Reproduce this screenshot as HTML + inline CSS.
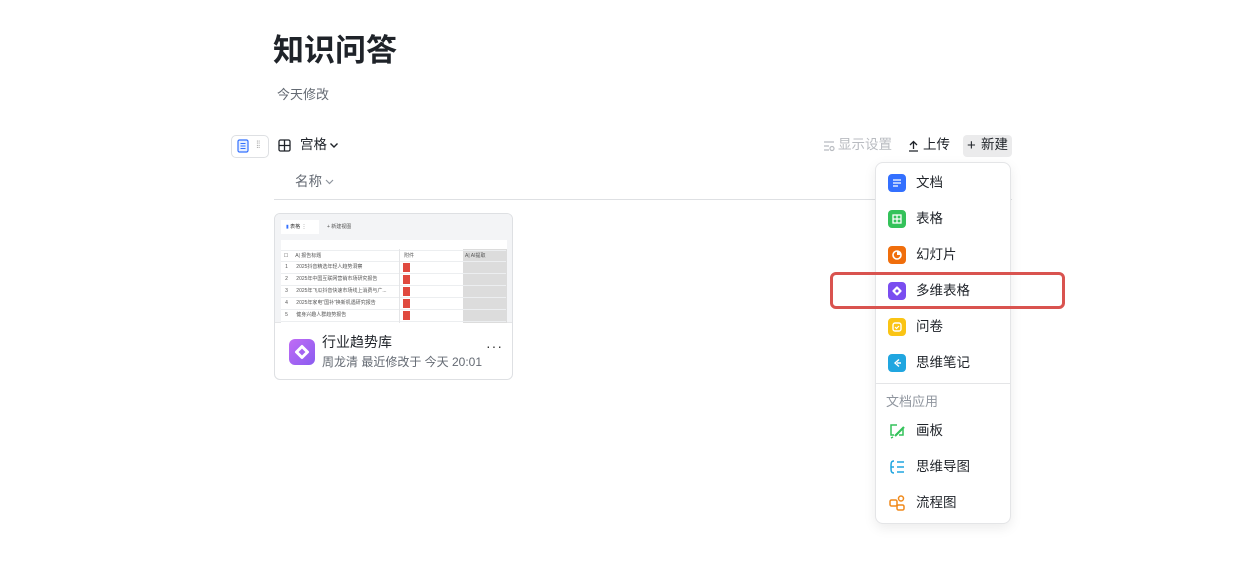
<!DOCTYPE html>
<html><head><meta charset="utf-8"><style>
*{margin:0;padding:0;box-sizing:border-box}
body{width:1246px;height:571px;background:#fff;font-family:"Liberation Sans","Noto Sans CJK SC",sans-serif;color:#1f2329;position:relative;overflow:hidden}
.a{position:absolute;white-space:nowrap}
.mi{position:absolute;left:0;width:135px;height:36px}
.mi .ic{position:absolute;left:12px;top:9px;width:18px;height:18px;border-radius:4px}
.mi .t{position:absolute;left:40px;top:9px;font-size:13.5px;line-height:18px;color:#1f2329}
.row{position:absolute;left:0;width:225px;height:12px;border-bottom:1px solid #eceef0;font-size:5px;line-height:11px;color:#555}
</style></head><body>
<div class="a" style="left:273px;top:31px;font-size:31px;font-weight:bold;line-height:40px;color:#1f2329">知识问答</div>
<div class="a" style="left:277px;top:86px;font-size:13px;line-height:18px;color:#646a73">今天修改</div>

<div class="a" style="left:231px;top:135px;width:38px;height:23px;border:1px solid #dee0e3;border-radius:5px"></div>
<svg class="a" style="left:237px;top:139px" width="12" height="14"><rect x="1" y="1" width="10" height="12" rx="1.5" fill="#e6efff" stroke="#3370ff" stroke-width="1.2"/><path d="M3.5 4.5h5M3.5 7h5M3.5 9.5h5" stroke="#3370ff" stroke-width="1"/></svg>
<div class="a" style="left:256px;top:140px;font-size:10px;color:#aaa;line-height:12px;letter-spacing:-1px">⁞⁞</div>
<svg class="a" style="left:278px;top:139px" width="13" height="13"><rect x="1" y="1" width="11" height="11" rx="1.5" fill="none" stroke="#1f2329" stroke-width="1.3"/><path d="M6.5 1v11M1 6.5h11" stroke="#1f2329" stroke-width="1.3"/></svg>
<div class="a" style="left:300px;top:136px;font-size:13.5px;line-height:18px">宫格</div>
<svg class="a" style="left:329px;top:142px" width="10" height="7"><path d="M1.5 1.5l3.5 3.5 3.5-3.5" fill="none" stroke="#1f2329" stroke-width="1.4"/></svg>

<svg class="a" style="left:823px;top:140px" width="12" height="12"><path d="M1 2h10M1 6h5M1 10h5" stroke="#b8bbc0" stroke-width="1.2"/><circle cx="9" cy="8.5" r="2" fill="none" stroke="#b8bbc0" stroke-width="1.2"/></svg>
<div class="a" style="left:838px;top:136px;font-size:13.5px;line-height:18px;color:#b8bbc0">显示设置</div>
<svg class="a" style="left:908px;top:140px" width="11" height="12"><path d="M5.5 9V1.5M2 5l3.5-3.5L9 5M1 11h9" fill="none" stroke="#1f2329" stroke-width="1.3"/></svg>
<div class="a" style="left:923px;top:136px;font-size:13.5px;line-height:18px">上传</div>
<div class="a" style="left:963px;top:135px;width:49px;height:22px;background:#ebebec;border-radius:4px"></div>
<div class="a" style="left:967px;top:136px;font-size:15px;line-height:20px">+</div>
<div class="a" style="left:981px;top:136px;font-size:13.5px;line-height:18px">新建</div>

<div class="a" style="left:295px;top:173px;font-size:13.5px;line-height:18px;color:#646a73">名称</div>
<svg class="a" style="left:325px;top:179px" width="9" height="6"><path d="M1 1l3.5 3.5L8 1" fill="none" stroke="#8f959e" stroke-width="1.2"/></svg>
<div class="a" style="left:274px;top:199px;width:738px;height:1px;background:#dee0e3"></div>

<div class="a" style="left:274px;top:213px;width:239px;height:167px;border:1px solid #dee0e3;border-radius:6px;overflow:hidden">
 <div class="a" style="left:0;top:0;width:239px;height:109px;background:#f3f4f6;border-bottom:1px solid #e4e5e7">
  <div class="a" style="left:6px;top:6px;width:226px;height:103px;background:#fff;overflow:hidden">
   <div class="a" style="left:0;top:0;width:226px;height:20px;background:#f3f4f6"></div>
   <div class="a" style="left:0;top:0;width:38px;height:14px;background:#fff;font-size:5px;line-height:14px;padding-left:5px;color:#333"><span style="color:#3370ff">▮</span> 表格 ⋮</div>
   <div class="a" style="left:46px;top:0;font-size:5px;line-height:14px;color:#555">+ 新建视图</div>
   <div class="a" style="left:182px;top:29px;width:44px;height:74px;background:#dcdcdc"></div>
   <div class="row" style="top:30px;border-top:1px solid #eceef0">&nbsp;&nbsp;☐&nbsp;&nbsp;&nbsp;&nbsp;&nbsp;A| 报告标题</div>
   <div class="a" style="left:123px;top:31px;font-size:5px;line-height:11px;color:#555">附件</div>
   <div class="a" style="left:184px;top:31px;font-size:5px;line-height:11px;color:#555">A| AI提取</div>
   <div class="row" style="top:42px">&nbsp;&nbsp;&nbsp;1&nbsp;&nbsp;&nbsp;&nbsp;&nbsp;&nbsp;2025抖音精选年轻人趋势洞察</div>
   <div class="row" style="top:54px">&nbsp;&nbsp;&nbsp;2&nbsp;&nbsp;&nbsp;&nbsp;&nbsp;&nbsp;2025年中国互联网营销市场研究报告</div>
   <div class="row" style="top:66px">&nbsp;&nbsp;&nbsp;3&nbsp;&nbsp;&nbsp;&nbsp;&nbsp;&nbsp;2025年飞瓜抖音快速市场线上消费与广...</div>
   <div class="row" style="top:78px">&nbsp;&nbsp;&nbsp;4&nbsp;&nbsp;&nbsp;&nbsp;&nbsp;&nbsp;2025年家电“国补”换新机遇研究报告</div>
   <div class="row" style="top:90px">&nbsp;&nbsp;&nbsp;5&nbsp;&nbsp;&nbsp;&nbsp;&nbsp;&nbsp;健身兴趣人群趋势报告</div>
   <div class="a" style="left:118px;top:29px;width:1px;height:74px;background:#e4e5e7"></div>
   <div class="a" style="left:122px;top:43px;width:7px;height:9px;background:#e04a3f"></div>
   <div class="a" style="left:122px;top:55px;width:7px;height:9px;background:#e04a3f"></div>
   <div class="a" style="left:122px;top:67px;width:7px;height:9px;background:#e04a3f"></div>
   <div class="a" style="left:122px;top:79px;width:7px;height:9px;background:#e04a3f"></div>
   <div class="a" style="left:122px;top:91px;width:7px;height:9px;background:#e04a3f"></div>
  </div>
 </div>
 <div class="a" style="left:14px;top:125px;width:26px;height:26px;border-radius:6px;background:linear-gradient(135deg,#c06cf5,#8a5cf0)"></div>
 <svg class="a" style="left:19px;top:130px" width="16" height="16"><path d="M8 2.5l5.5 5.5-5.5 5.5-5.5-5.5z" fill="none" stroke="#fff" stroke-width="3" stroke-linejoin="round"/></svg>
 <div class="a" style="left:47px;top:118px;font-size:14px;line-height:20px">行业趋势库</div>
 <div class="a" style="left:47px;top:140px;font-size:12px;line-height:17px;color:#646a73">周龙清 最近修改于 今天 20:01</div>
 <div class="a" style="left:211px;top:124px;font-size:14px;color:#333;letter-spacing:1px">···</div>
</div>

<div class="a" style="left:875px;top:162px;width:136px;height:362px;background:#fff;border:1px solid #e4e5e7;border-radius:8px;box-shadow:0 4px 12px rgba(0,0,0,0.08)">
 <div class="mi" style="top:2px"><div class="ic" style="background:#3370ff"></div><svg class="a" style="left:15px;top:13px" width="12" height="10"><path d="M2 2h8M2 5h8M2 8h5" stroke="#fff" stroke-width="1.3"/></svg><div class="t">文档</div></div>
 <div class="mi" style="top:38px"><div class="ic" style="background:#34c25a"></div><svg class="a" style="left:16px;top:13px" width="10" height="10"><rect x="1" y="1" width="8" height="8" fill="none" stroke="#fff" stroke-width="1.3"/><path d="M5 1v8M1 5h8" stroke="#fff" stroke-width="1.2"/></svg><div class="t">表格</div></div>
 <div class="mi" style="top:74px"><div class="ic" style="background:#f06e0c"></div><svg class="a" style="left:15px;top:12px" width="12" height="12"><circle cx="6" cy="6" r="4" fill="none" stroke="#fff" stroke-width="1.6"/><path d="M6 6V1.5A4.5 4.5 0 0 1 10.5 6z" fill="#fff"/></svg><div class="t">幻灯片</div></div>
 <div class="mi" style="top:110px"><div class="ic" style="background:#7a4df0"></div><svg class="a" style="left:16px;top:13px" width="10" height="10"><path d="M5 1.5l3.5 3.5-3.5 3.5-3.5-3.5z" fill="none" stroke="#fff" stroke-width="2.2" stroke-linejoin="round"/></svg><div class="t">多维表格</div></div>
 <div class="mi" style="top:146px"><div class="ic" style="background:#fac414"></div><svg class="a" style="left:15px;top:12px" width="12" height="12"><rect x="2" y="2" width="8" height="8" rx="2" fill="none" stroke="#fff" stroke-width="1.4"/><path d="M4 6l1.5 1.5L8 5" fill="none" stroke="#fff" stroke-width="1.2"/></svg><div class="t">问卷</div></div>
 <div class="mi" style="top:182px"><div class="ic" style="background:#20a6e0"></div><svg class="a" style="left:15px;top:12px" width="12" height="12"><path d="M8 2.5L4 6l4 3.5M6 6h4" fill="none" stroke="#fff" stroke-width="1.4"/></svg><div class="t">思维笔记</div></div>
 <div class="a" style="left:0;top:220px;width:134px;height:1px;background:#e4e5e7"></div>
 <div class="a" style="left:10px;top:230px;font-size:13px;line-height:18px;color:#8f959e">文档应用</div>
 <div class="mi" style="top:250px"><svg class="a" style="left:12px;top:9px" width="18" height="18"><path d="M9 3H3v10h3M15 7v6h-4" fill="none" stroke="#34c25a" stroke-width="1.5"/><path d="M7 14l9-9" stroke="#34c25a" stroke-width="2.2"/><path d="M3 16l2-1" stroke="#34c25a" stroke-width="1.4"/></svg><div class="t">画板</div></div>
 <div class="mi" style="top:286px"><svg class="a" style="left:12px;top:9px" width="18" height="18"><path d="M6 3C3 3 3 5 3 9s0 6 3 6M3 9h3M9 4h7M9 9h7M9 14h7" fill="none" stroke="#20a6e0" stroke-width="1.5"/></svg><div class="t">思维导图</div></div>
 <div class="mi" style="top:322px"><svg class="a" style="left:12px;top:9px" width="18" height="18"><rect x="2" y="6" width="7" height="6" rx="1.5" fill="none" stroke="#f0891a" stroke-width="1.5"/><circle cx="13" cy="4.5" r="2.5" fill="none" stroke="#f0891a" stroke-width="1.5"/><rect x="9" y="11" width="7" height="5" rx="1.5" fill="none" stroke="#f0891a" stroke-width="1.5"/></svg><div class="t">流程图</div></div>
</div>

<div class="a" style="left:830px;top:272px;width:235px;height:37px;border:3px solid #d9534f;border-radius:6px"></div>
</body></html>
